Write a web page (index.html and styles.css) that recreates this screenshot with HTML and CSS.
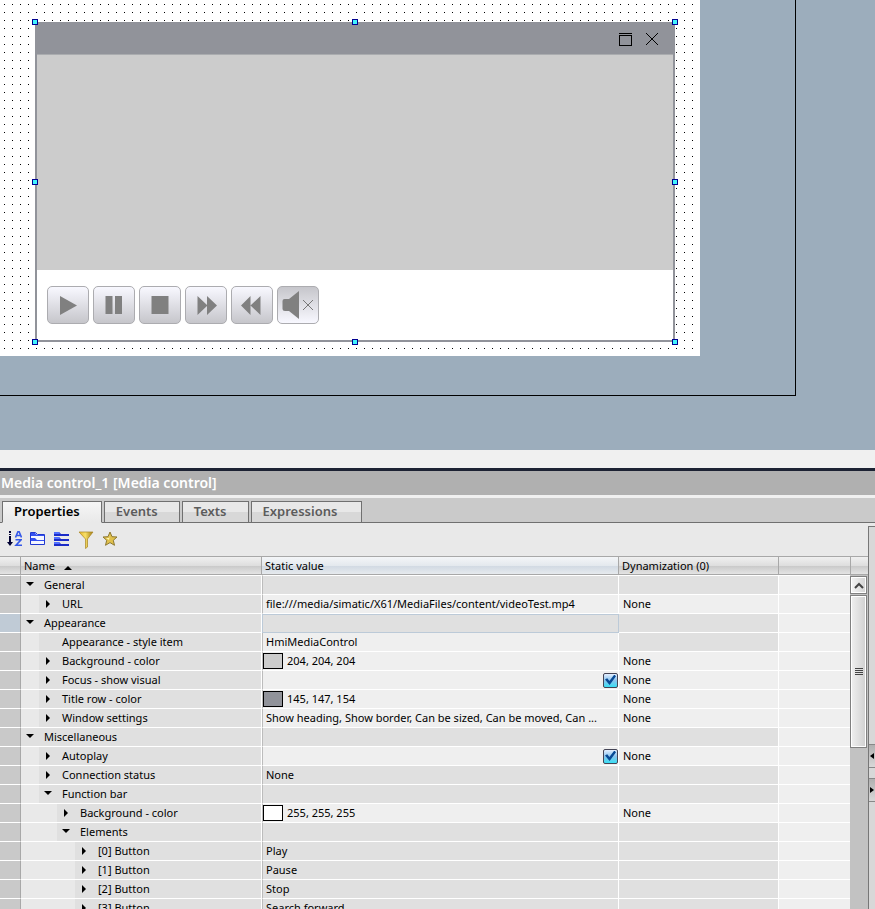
FILE: index.html
```html
<!DOCTYPE html>
<html lang="en">
<head>
<meta charset="utf-8">
<title>Media control_1</title>
<link rel="stylesheet" href="styles.css">
</head>
<body>
<main class="workspace">
  <div class="frame">
    <div class="screen">
      <section class="media">
        <header class="media-title">
          <button class="win" aria-label="Maximize"><svg width="14" height="14" viewBox="0 0 14 14" shape-rendering="crispEdges"><path d="M0 .5H13M.5 2.5H12.5V12.5H.5Z" fill="none" stroke="#000"/></svg></button>
          <button class="win" aria-label="Close"><svg width="14" height="14" viewBox="0 0 14 14"><path d="M0 0L12 12M12 0L0 12" fill="none" stroke="#000"/></svg></button>
        </header>
        <div class="media-view"></div>
        <div class="media-bar">
          <button class="key" aria-label="Play"><svg width="40" height="36" viewBox="0 0 40 36"><path d="M12 9V28L29 18.500Z"/></svg></button>
          <button class="key" aria-label="Pause"><svg width="40" height="36" viewBox="0 0 40 36"><path d="M11.500 9h7v18h-7zM21 9h7v18h-7z"/></svg></button>
          <button class="key" aria-label="Stop"><svg width="40" height="36" viewBox="0 0 40 36"><path d="M11.500 9h17v18h-17z"/></svg></button>
          <button class="key" aria-label="Search forward"><svg width="40" height="36" viewBox="0 0 40 36"><path d="M11.500 9V28L21.500 18.500ZM21 9V28L31 18.500Z"/></svg></button>
          <button class="key" aria-label="Search backward"><svg width="40" height="36" viewBox="0 0 40 36"><path d="M18.500 9V28L9 18.500ZM28.500 9V28L18.500 18.500Z"/></svg></button>
          <button class="key muted" aria-label="Mute"><svg width="40" height="36" viewBox="0 0 40 36"><path d="M4.500 14Q4.500 12 6.500 12H11L21 4V32L11 24H7Q4.500 24 4.500 22Z"/><path d="M25 13L35 23M35 13L25 23" stroke="#777"/></svg></button>
        </div>
        <i class="grip nw"></i><i class="grip n"></i><i class="grip ne"></i>
        <i class="grip w"></i><i class="grip e"></i>
        <i class="grip sw"></i><i class="grip s"></i><i class="grip se"></i>
      </section>
    </div>
  </div>
</main>
<section class="inspector">
  <h1 class="inspector-title">Media control_1 [Media control]</h1>
  <nav class="tabs">
    <button class="tab active">Properties</button>
    <button class="tab">Events</button>
    <button class="tab">Texts</button>
    <button class="tab">Expressions</button>
  </nav>
  <div class="inspector-body">
    <div class="content">
      <div class="toolbar">
        <button class="tool" aria-label="Sort"><svg width="16" height="16" viewBox="-1 0 16 16"><path d="M3 0V2M3 3V4M3 5V11" stroke="#000033" stroke-width="2"/><path d="M0 11H6L3 15Z" fill="#000033"/><path d="M8.500 6.500L11 .5H12L14.500 6.500M9.500 4.500H13.500M8.500 8.800H14L9 14.300H15" fill="none" stroke="#3558e8" stroke-width="1.600"/></svg></button>
        <button class="tool" aria-label="Group"><svg width="16" height="16" viewBox="0 0 16 16"><path d="M.5 13.500V1.500H5.500L7.500 3.500H14.500V13.500Z" fill="#f4f6ff" stroke="#2038d0"/><path d="M1 2H5L7 4H14V5H1ZM1 9V7H5L7 9H14V10H1Z" fill="#3450f0"/></svg></button>
        <button class="tool" aria-label="List"><svg width="16" height="16" viewBox="0 0 16 16"><path d="M0 1H5L7 3H15V5H0ZM0 6H5L7 8H15V10H0ZM0 11H5L7 13H15V15H0Z" fill="#1c2cc8"/><path d="M0 1H5L6 3H0ZM0 6H5L6 8H0ZM0 11H5L6 13H0Z" fill="#5070ff"/></svg></button>
        <button class="tool" aria-label="Filter"><svg width="16" height="18" viewBox="0 0 16 18"><defs><linearGradient id="gold"><stop stop-color="#e8b428"/><stop offset=".45" stop-color="#f8e068"/><stop offset="1" stop-color="#a07810"/></linearGradient></defs><path d="M1 1H15L9.500 8V16L7.500 17.500V8Z" fill="url(#gold)" stroke="#a88420" stroke-width=".7"/></svg></button>
        <button class="tool" aria-label="Favorites"><svg width="16" height="16" viewBox="0 0 16 16"><path d="M8 1L10 5.700L15 6L11.300 9.300L12.500 14.300L8 11.600L3.500 14.300L4.700 9.300L1 6L6 5.700Z" fill="#e0c04c" stroke="#8c7830"/><path d="M8 3L7 7L4 7L7 9Z" fill="#fff7b0"/></svg></button>
      </div>
      <div class="grid">
        <table>
          <colgroup><col class="c-gutter"><col class="c-name"><col><col class="c-dyn"><col class="c-rest"></colgroup>
          <thead><tr><th></th><th>Name <svg class="sort" width="8" height="4" viewBox="0 0 8 4"><path d="M0 4L4 0L8 4Z"/></svg></th><th class="picked">Static value</th><th>Dynamization (0)</th><th></th></tr></thead>
          <tbody id="rows"></tbody>
        </table>
        <div class="scroll">
          <div class="scroll-head"></div>
          <button class="scroll-up" aria-label="Scroll up"><svg width="10" height="7" viewBox="0 0 10 7"><path d="M1 6L5 2L9 6" fill="none" stroke="#444" stroke-width="2"/></svg></button>
          <div class="thumb"><i></i><i></i><i></i><i></i></div>
        </div>
      </div>
    </div>
    <aside class="side">
      <button aria-label="Expand"><svg width="4" height="6" viewBox="0 0 4 6"><path d="M4 0V6L0 3Z"/></svg></button>
      <button aria-label="Collapse"><svg width="4" height="6" viewBox="0 0 4 6"><path d="M0 0V6L4 3Z"/></svg></button>
    </aside>
  </div>
</section>
<script src="rows.js"></script>
</body>
</html>
```
FILE: styles.css
```css
* { box-sizing: border-box; }
body {
  margin: 0;
  height: 100vh;
  overflow: hidden;
  display: flex;
  flex-direction: column;
  background: #f0f0f0;
  color: #000;
  font: 11px/18px "Noto Sans", "Open Sans", sans-serif;
}
button { margin: 0; padding: 0; border: 0; background: none; font: inherit; color: inherit; }
svg { display: block; }

.workspace { flex: none; padding: 0 79px 54px 0; background: #9cadbc; }
.frame { padding: 0 95px 39px 0; border: solid #000; border-width: 0 1px 1px 0; }
.screen {
  padding: 22px 25px 14px 35px;
  background:
    linear-gradient(transparent 1px, #fff 1px) 4px 4px / 8px 8px,
    linear-gradient(90deg, #000 1px, #fff 1px) 4px 4px / 8px 8px;
}
.media { position: relative; border: 2px solid #91939a; border-top: 0; background: #fff; }
.media-title {
  display: flex;
  justify-content: flex-end;
  gap: 13px;
  height: 33px;
  padding: 11px 13px 0 0;
  background: #91939a;
  border-bottom: 1px solid #aaacaf;
}
.win { width: 14px; height: 14px; }
.media-view { height: 215px; background: #ccc; }
.media-bar { display: flex; gap: 4px; padding: 16px 10px; }
.key {
  width: 42px;
  height: 38px;
  border: 1px solid #acacb0;
  border-radius: 5px;
  background: linear-gradient(#f8f8ff, #c6c6cb);
  fill: #808080;
}
.key.muted { background: linear-gradient(#c6c6cb, #f8f8ff); }
.grip { position: absolute; width: 6px; height: 6px; border: 1px solid #000090; background: #40f4ff; }
.nw, .w, .sw { left: -5px; }
.n, .s { left: calc(50% - 3px); }
.ne, .e, .se { right: -5px; }
.nw, .n, .ne { top: -3px; }
.w, .e { top: calc(50% - 2px); }
.sw, .s, .se { bottom: -5px; }

.inspector { flex: 1; min-height: 0; margin-top: 18px; display: flex; flex-direction: column; border-top: 3px solid #1c2233; }
.inspector-title { margin: 0; padding: 0 1px; font-size: 14px; font-weight: 600; line-height: 24px; color: #fff; background: #b0b0b0; }
.tabs { display: flex; gap: 2px; height: 28px; padding: 3px 0 0 2px; border-top: 3px solid #f0f0f0; background: #cacaca; box-shadow: inset 0 -1px #707070; }
.tab {
  padding: 0 21px 2px 11px;
  border: 1px solid #707070;
  font-size: 13px;
  font-weight: 600;
  line-height: 18px;
  color: #5c5c5c;
  background: linear-gradient(#e8e8e8 50%, #d8d8d8 50%);
}
.tab.active { color: #000; border-bottom-color: #e9e9e9; background: linear-gradient(#f6f6f6, #e9e9e9); }
.tab:last-child { padding-right: 24px; }
.inspector-body { flex: 1; min-height: 0; display: flex; background: #e9e9e9; }
.content { flex: 1; min-width: 0; overflow: hidden; display: flex; flex-direction: column; }
.toolbar { flex: none; display: flex; gap: 8px; height: 33px; padding: 8px 6px; }
.tool { width: 16px; height: 16px; }

.grid { flex: 1; min-height: 0; display: flex; align-items: stretch; }
table { flex: 1; align-self: flex-start; width: 0; table-layout: fixed; border-collapse: separate; border-spacing: 0; }
.c-gutter { width: 21px; }
.c-name { width: 241px; }
.c-dyn { width: 160px; }
.c-rest { width: 71px; }
th, .scroll-head {
  height: 19px;
  padding: 0 3px;
  border: solid #a8a8a8;
  border-width: 1px 1px 1px 0;
  background: linear-gradient(#f0f0f0, #dedede 50%, #cacaca 55%, #e4e4e4);
  font-weight: 400;
  line-height: 17px;
  text-align: left;
}
th:last-child { border-right: 0; }
th.picked { background: linear-gradient(#f4f6f8, #e4e9ee 50%, #d2dae3 55%, #e6eaee); }
.sort { display: inline-block; margin-left: 6px; }
td { height: 19px; padding: 0 4px; border: solid #fff; border-width: 0 1px 1px 0; background: #efefef; white-space: nowrap; overflow: hidden; }
td:last-child { border-right: 0; }
td.gutter { background: #c9c9c9; border-right-color: #a8a8a8; }
td.off { background: #e0e0e0; }
td.name { padding: 0; background: #e9e9e9; }
td.value { padding: 0 0 0 3px; border-left: 1px solid #bcbcbc; }
tr.current .gutter { background: #c0cbd6; }
tr.current .value { border: 1px solid #bccad8; }
.label { display: flex; align-items: center; height: 18px; background: #e0e0e0; }
.d1 { margin-left: 18px; }
.d2 { margin-left: 36px; }
.d3 { margin-left: 54px; }
.arrow { flex: none; width: 8px; height: 8px; margin: 0 10px 0 5px; }
tbody tr:first-child td { height: 20px; border-top: 1px solid #fff; }
.color { display: flex; align-items: center; gap: 4px; margin-left: -3px; }
.swatch { width: 20px; height: 16px; border: 1px solid #000; }
.check { display: flex; justify-content: flex-end; }
.check input {
  appearance: none;
  width: 15px;
  height: 15px;
  margin: 0;
  border: 1px solid #445;
  border-radius: 2px;
  background: linear-gradient(#e4efff, #8bc4ee 50%, #38dff4);
  display: grid;
  place-items: center;
}
.check input::after { content: ""; width: 11px; height: 11px; background: #074a96; clip-path: polygon(0 45%, 20% 35%, 40% 60%, 85% 0, 100% 15%, 42% 95%); }

.scroll { flex: none; width: 18px; display: flex; flex-direction: column; background: #c2c2c2; }
.scroll-head { flex: none; border-width: 1px 0 1px 1px; }
.scroll-up { flex: none; display: grid; place-items: center; height: 18px; margin: 1px 1px 1px 0; border: 1px solid #808080; background: linear-gradient(90deg, #f4f4f4, #d4d4d4); box-shadow: inset 0 0 0 1px #fff; }
.thumb { flex: none; display: flex; flex-direction: column; align-items: center; justify-content: center; gap: 1px; height: 153px; margin-right: 1px; border: 1px solid #808080; background: linear-gradient(90deg, #f0f0f0, #d0d0d0); box-shadow: inset 0 0 0 1px #fff; }
.thumb i { width: 8px; height: 1px; background: #444; }
.side { flex: none; width: 7px; margin-top: 3px; padding-top: 217px; display: flex; flex-direction: column; gap: 10px; border: solid #777; border-width: 1px 0 0 1px; background: #d8d8d8; }
.side button { display: grid; place-items: center; height: 24px; border: solid #888; border-width: 1px 0; background: linear-gradient(#b0b0b0, #d8d8d8); }
```
FILE: rows.js
```js
// off: which cells are shaded as not editable, "v" for the value and "d" for the dynamization
const rows = [
  { depth: 0, open: true, name: "General", off: "vd" },
  { depth: 1, open: false, name: "URL", text: "file:///media/simatic/X61/MediaFiles/content/videoTest.mp4", dyn: "None" },
  { depth: 0, open: true, name: "Appearance", off: "vd", current: true },
  { depth: 1, name: "Appearance - style item", text: "HmiMediaControl", off: "d" },
  { depth: 1, open: false, name: "Background - color", color: "204, 204, 204", dyn: "None" },
  { depth: 1, open: false, name: "Focus - show visual", check: true, dyn: "None" },
  { depth: 1, open: false, name: "Title row - color", color: "145, 147, 154", dyn: "None" },
  { depth: 1, open: false, name: "Window settings", text: "Show heading, Show border, Can be sized, Can be moved, Can ...", dyn: "None" },
  { depth: 0, open: true, name: "Miscellaneous", off: "vd" },
  { depth: 1, open: false, name: "Autoplay", check: true, dyn: "None" },
  { depth: 1, open: false, name: "Connection status", text: "None", off: "vd" },
  { depth: 1, open: true, name: "Function bar", off: "vd" },
  { depth: 2, open: false, name: "Background - color", color: "255, 255, 255", dyn: "None" },
  { depth: 2, open: true, name: "Elements", off: "vd" },
  { depth: 3, open: false, name: "[0] Button", text: "Play", off: "vd" },
  { depth: 3, open: false, name: "[1] Button", text: "Pause", off: "vd" },
  { depth: 3, open: false, name: "[2] Button", text: "Stop", off: "vd" },
  { depth: 3, open: false, name: "[3] Button", text: "Search forward", off: "vd" }
];

const arrow = open => {
  const d = open === undefined ? "" : open ? "M0 1H8L4 5Z" : "M2 0V8L6 4Z";
  return `<svg class="arrow" viewBox="0 0 8 8"><path d="${d}"/></svg>`;
};

const value = r => {
  if (r.color) return `<div class="color"><span class="swatch" style="background:rgb(${r.color})"></span>${r.color}</div>`;
  if (r.check) return `<div class="check"><input type="checkbox" checked aria-label="${r.name}"></div>`;
  return r.text || "";
};

document.getElementById("rows").innerHTML = rows.map(r => {
  const off = r.off || "";
  return `<tr class="${r.current ? "current" : ""}"><td class="gutter"></td>
    <td class="name"><div class="label d${r.depth}">${arrow(r.open)}${r.name}</div></td>
    <td class="value ${off.includes("v") ? "off" : ""}">${value(r)}</td>
    <td class="${off.includes("d") ? "off" : ""}">${r.dyn || ""}</td><td></td></tr>`;
}).join("");
```
